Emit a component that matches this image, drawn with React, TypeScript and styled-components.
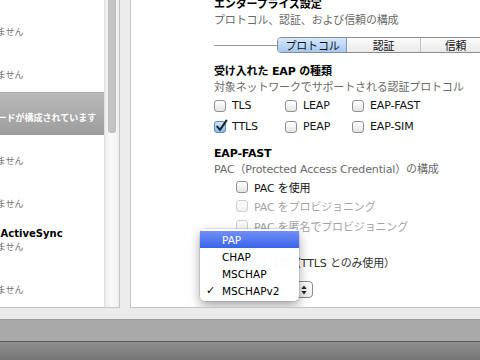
import React from "react";
import styled, { createGlobalStyle, css } from "styled-components";

const SANS = `"DejaVu Sans", "Noto Sans CJK JP", sans-serif`;

const Global = createGlobalStyle`
  html, body { margin: 0; padding: 0; }
  body { width: 480px; height: 360px; overflow: hidden; font-family: ${SANS}; background: #ebebeb; }
  * { box-sizing: border-box; }
`;

const Screen = styled.div`
  width: 480px;
  height: 360px;
  display: flex;
  flex-direction: column;
  overflow: hidden;
`;

const Workspace = styled.div`
  height: 319px;
  flex: none;
  display: flex;
  gap: 10px;
  padding-bottom: 11px;
  background: #ebebeb;
`;

const SidePanel = styled.div`
  width: 120px;
  flex: none;
  display: flex;
  background: #fff;
  border-right: 1px solid #c4c4c4;
  border-bottom: 1px solid #c4c4c4;
  overflow: hidden;
`;

const List = styled.div`
  flex: 1;
  min-width: 0;
  overflow: hidden;
  padding-top: 6px;
`;

const Row = styled.div<{ $selected?: boolean }>`
  height: 43px;
  padding-top: 6px;
  white-space: nowrap;
  ${(p) =>
    p.$selected &&
    css`
      background: linear-gradient(#bababa, #9c9c9c);
      border-top: 1px solid #a9a9a9;
      padding-top: 5px;
    `}
`;

const RowText = styled.div`
  margin-left: -57px;
`;

const RowTitle = styled.div<{ $selected?: boolean }>`
  font-size: 10px;
  font-weight: bold;
  line-height: 14px;
  color: ${(p) => (p.$selected ? "#fff" : "#000")};
`;

const RowSub = styled.div<{ $selected?: boolean }>`
  font-size: 9px;
  line-height: 12px;
  color: ${(p) => (p.$selected ? "#fff" : "#727272")};
  font-weight: ${(p) => (p.$selected ? "bold" : "normal")};
`;

const ScrollTrack = styled.div`
  width: 15px;
  flex: none;
  padding-left: 3px;
  border-left: 1px solid #dedede;
  background: linear-gradient(90deg, #ececec, #f8f8f8 35%, #f8f8f8 65%, #eeeeee);
`;

const Thumb = styled.div`
  width: 8px;
  height: 143px;
  margin-top: -10px;
  border-radius: 4px;
  background: #c3c3c3;
  box-shadow: inset 0 0 0 0.5px #b5b5b5;
`;

const DetailPanel = styled.div`
  flex: 1;
  min-width: 0;
  background: #fff;
  border-left: 1px solid #c4c4c4;
  border-bottom: 1px solid #c4c4c4;
  overflow: hidden;
  padding-left: 83px;
  display: flex;
  flex-direction: column;
  font-size: 11px;
  letter-spacing: -0.15px;
  white-space: nowrap;
`;

const Heading = styled.div<{ $mt: number }>`
  font-weight: bold;
  line-height: 16px;
  color: #000;
  margin-top: ${(p) => p.$mt}px;
`;

const Desc = styled.div`
  line-height: 16px;
  color: #6a6a6a;
`;

const TabStrip = styled.div`
  display: flex;
  align-items: center;
  height: 16px;
  margin-top: 8px;
`;

const Rule = styled.div`
  width: 63px;
  height: 1px;
  flex: none;
  background: #9a9a9a;
`;

const Segmented = styled.div`
  display: flex;
  flex: none;
  height: 16px;
  border: 1px solid #8c8c8c;
  border-radius: 4px;
  overflow: hidden;
`;

const Segment = styled.div<{ $active?: boolean; $w: number; $sep?: boolean }>`
  width: ${(p) => p.$w}px;
  display: flex;
  align-items: center;
  justify-content: center;
  color: #111;
  background: linear-gradient(#fdfdfd, #e9e9e9);
  ${(p) => p.$sep && css`border-left: 1px solid #c2c2c2;`}
  ${(p) =>
    p.$active &&
    css`
      background: linear-gradient(#d6e8fc, #a3c8f1);
      box-shadow: inset -1px 0 0 #7c9cc4;
    `}
`;

const OptionGrid = styled.div`
  display: grid;
  grid-template-columns: 71px 67px auto;
  grid-auto-rows: 21px;
  margin-top: -1px;
`;

const Option = styled.label<{ $disabled?: boolean }>`
  display: flex;
  align-items: center;
  gap: 6px;
  color: ${(p) => (p.$disabled ? "#a3a3a3" : "#111")};
`;

const Box = styled.span<{ $checked?: boolean; $disabled?: boolean }>`
  position: relative;
  width: 12px;
  height: 12px;
  flex: none;
  border-radius: 3px;
  border: 1px solid ${(p) => (p.$disabled ? "#cfcfcf" : "#8f8f8f")};
  background: ${(p) =>
    p.$checked
      ? "linear-gradient(#d3e6fb, #8dbcef)"
      : p.$disabled
      ? "linear-gradient(#fcfcfc, #f1f1f1)"
      : "linear-gradient(#ffffff, #e4e4e4)"};
  ${(p) => p.$checked && css`border-color: #5f86b8;`}
`;

const CheckMark = styled.svg`
  position: absolute;
  left: 0px;
  top: -3px;
`;

const PacList = styled.div`
  display: flex;
  flex-direction: column;
  margin-left: 22px;
  margin-top: -1px;
`;

const PacRow = styled.div`
  height: 19.5px;
  display: flex;
  align-items: center;
`;

const FieldLabel = styled.div`
  line-height: 16px;
  margin-top: 20.5px;
  color: #333;
`;

const PopupWrap = styled.div`
  position: relative;
  margin-top: 9px;
  width: 99px;
  height: 17px;
`;

const PopupButton = styled.div`
  width: 99px;
  height: 17px;
  border: 1px solid #8b8b8b;
  border-radius: 4px;
  background: linear-gradient(#ffffff, #ececec);
  display: flex;
  align-items: center;
  justify-content: space-between;
  padding: 0 5px 0 8px;
  font-size: 10.5px;
`;

const Menu = styled.div`
  position: absolute;
  left: -14px;
  top: -52px;
  width: 99px;
  padding: 2px 0;
  background: rgba(255, 255, 255, 0.98);
  border-radius: 5px;
  box-shadow: 0 0 0 0.5px rgba(0, 0, 0, 0.18), 0 5px 12px rgba(0, 0, 0, 0.35);
  z-index: 2;
  letter-spacing: 0;
`;

const MenuItem = styled.div<{ $hl?: boolean }>`
  display: flex;
  align-items: center;
  height: 17px;
  font-size: 10.5px;
  color: #000;
  ${(p) =>
    p.$hl &&
    css`
      background: linear-gradient(#7090f6, #3c64ec);
      color: #fff;
    `}
`;

const Tick = styled.span`
  width: 22px;
  padding-left: 6px;
  font-size: 11px;
`;

const StatusBar = styled.div`
  height: 22px;
  flex: none;
  background: #a9a9a9;
  border-top: 1px solid #9c9c9c;
`;

const Dock = styled.div`
  height: 19px;
  flex: none;
  background: linear-gradient(#8f8f8f, #767676);
  border-top: 1px solid #5c5c5c;
`;

type CheckProps = { label: string; checked?: boolean; disabled?: boolean };

const Check: React.FC<CheckProps> = ({ label, checked, disabled }) => (
  <Option $disabled={disabled}>
    <Box $checked={checked} $disabled={disabled}>
      {checked && (
        <CheckMark width="14" height="14" viewBox="0 0 14 14">
          <path d="M2.2 7.6 L5 10.8 L11.4 1.6" fill="none" stroke="#1b2633" strokeWidth="2.1" strokeLinecap="round" strokeLinejoin="round" />
        </CheckMark>
      )}
    </Box>
    {label}
  </Option>
);

const rows = [
  { title: "パスコード", sub: "構成されていません" },
  { title: "制限", sub: "構成されていません" },
  { title: "Wi-Fi", sub: "1 個のペイロードが構成されています", selected: true },
  { title: "VPN", sub: "構成されていません" },
  { title: "メール", sub: "構成されていません" },
  { title: "Exchange ActiveSync", sub: "構成されていません" },
  { title: "LDAP", sub: "構成されていません" },
  { title: "連絡先", sub: "構成されていません" },
];

export default function App() {
  return (
    <>
      <Global />
      <Screen>
        <Workspace>
          <SidePanel>
            <List>
              {rows.map((r) => (
                <Row key={r.title} $selected={r.selected}>
                  <RowText>
                    <RowTitle $selected={r.selected}>{r.title}</RowTitle>
                    <RowSub $selected={r.selected}>{r.sub}</RowSub>
                  </RowText>
                </Row>
              ))}
            </List>
            <ScrollTrack>
              <Thumb />
            </ScrollTrack>
          </SidePanel>
          <DetailPanel>
            <Heading $mt={-3}>エンタープライズ設定</Heading>
            <Desc>プロトコル、認証、および信頼の構成</Desc>
            <TabStrip>
              <Rule />
              <Segmented>
                <Segment $w={69} $active>
                  プロトコル
                </Segment>
                <Segment $w={73}>認証</Segment>
                <Segment $w={70} $sep>
                  信頼
                </Segment>
              </Segmented>
            </TabStrip>
            <Heading $mt={11}>受け入れた EAP の種類</Heading>
            <Desc>対象ネットワークでサポートされる認証プロトコル</Desc>
            <OptionGrid>
              <Check label="TLS" />
              <Check label="LEAP" />
              <Check label="EAP-FAST" />
              <Check label="TTLS" checked />
              <Check label="PEAP" />
              <Check label="EAP-SIM" />
            </OptionGrid>
            <Heading $mt={9}>EAP-FAST</Heading>
            <Desc>PAC（Protected Access Credential）の構成</Desc>
            <PacList>
              <PacRow>
                <Check label="PAC を使用" />
              </PacRow>
              <PacRow>
                <Check label="PAC をプロビジョニング" disabled />
              </PacRow>
              <PacRow>
                <Check label="PAC を匿名でプロビジョニング" disabled />
              </PacRow>
            </PacList>
            <FieldLabel>内部認証の種類（TTLS とのみ使用）</FieldLabel>
            <PopupWrap>
              <PopupButton>
                <span>MSCHAPv2</span>
                <svg width="6" height="10" viewBox="0 0 6 10">
                  <path d="M3 0.5 L5.6 4 L0.4 4 Z" fill="#222" />
                  <path d="M3 9.5 L5.6 6 L0.4 6 Z" fill="#222" />
                </svg>
              </PopupButton>
              <Menu>
                <MenuItem $hl>
                  <Tick />
                  PAP
                </MenuItem>
                <MenuItem>
                  <Tick />
                  CHAP
                </MenuItem>
                <MenuItem>
                  <Tick />
                  MSCHAP
                </MenuItem>
                <MenuItem>
                  <Tick>✓</Tick>
                  MSCHAPv2
                </MenuItem>
              </Menu>
            </PopupWrap>
          </DetailPanel>
        </Workspace>
        <StatusBar />
        <Dock />
      </Screen>
    </>
  );
}
